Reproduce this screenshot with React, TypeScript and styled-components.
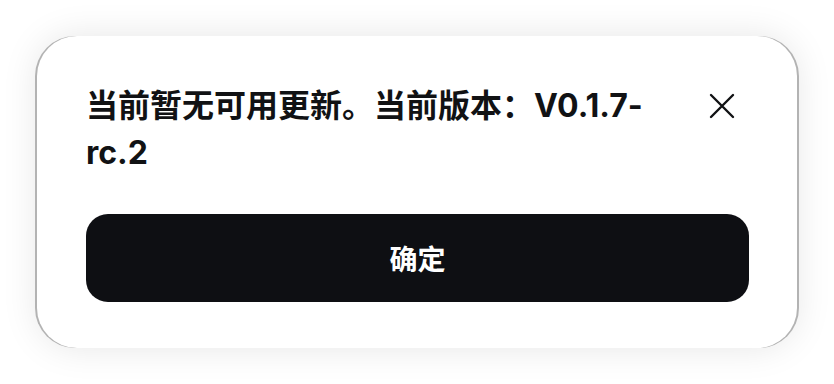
import styled, { createGlobalStyle } from "styled-components"

const GlobalStyle = createGlobalStyle`
  html, body {
    margin: 0;
    padding: 0;
    background: #ffffff;
  }

  body {
    font-family: "Inter", "Noto Sans CJK SC", sans-serif;
  }
`

const Page = styled.div`
  width: 834px;
  height: 384px;
  padding: 36px 0 0 37px;
  box-sizing: border-box;
`

const Dialog = styled.div`
  width: 760px;
  height: 312px;
  box-sizing: border-box;
  padding: 46px 48px 46px 49px;
  background: #ffffff;
  border-radius: 40px;
  box-shadow: -2px 0 0 #b3b3b3, 2px 0 0 #b3b3b3, 0 0 36px rgba(0, 0, 0, 0.1);
  display: flex;
  flex-direction: column;
  gap: 38px;
`

const Header = styled.div`
  display: flex;
  align-items: flex-start;
  gap: 24px;
`

const Title = styled.h2`
  flex: 1;
  margin: 0;
  font-family: "Inter", "Noto Sans CJK SC", sans-serif;
  font-size: 32px;
  font-weight: 700;
  line-height: 47px;
  color: #111214;
`

const CloseButton = styled.button`
  width: 48px;
  height: 48px;
  margin-right: 3px;
  flex-shrink: 0;
  border: none;
  background: transparent;
  padding: 0;
  display: flex;
  align-items: center;
  justify-content: center;
  color: #111214;
  cursor: pointer;
`

const ConfirmButton = styled.button`
  width: 100%;
  height: 88px;
  border: none;
  border-radius: 22px;
  background: #0e0f13;
  color: #ffffff;
  font-family: "Inter", "Noto Sans CJK SC", sans-serif;
  font-size: 28px;
  font-weight: 700;
  cursor: pointer;
`

const CloseIcon = () => (
  <svg width="26" height="26" viewBox="0 0 26 26" fill="none">
    <path d="M2 2L24 24M24 2L2 24" stroke="currentColor" strokeWidth="2.4" strokeLinecap="round" />
  </svg>
)

export default function App() {
  return (
    <>
      <GlobalStyle />
      <Page>
        <Dialog>
          <Header>
            <Title>当前暂无可用更新。当前版本：V0.1.7-rc.2</Title>
            <CloseButton aria-label="关闭">
              <CloseIcon />
            </CloseButton>
          </Header>
          <ConfirmButton>确定</ConfirmButton>
        </Dialog>
      </Page>
    </>
  )
}
